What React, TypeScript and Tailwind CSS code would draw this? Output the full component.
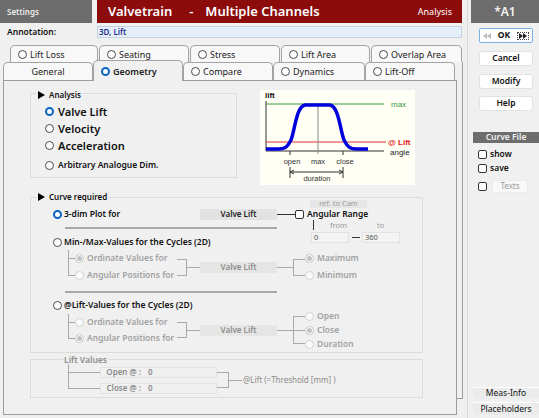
import React from 'react';

type RState = 'on' | 'off' | 'dis' | 'dison';

const Radio: React.FC<{ s: RState }> = ({ s }) => {
  if (s === 'on')
    return <span className="block w-[9px] h-[9px] shrink-0 rounded-full border-[2.5px] border-[#0a64c2] bg-white" />;
  if (s === 'off')
    return <span className="block w-[9px] h-[9px] shrink-0 rounded-full border border-[#4a4a4a] bg-white" />;
  if (s === 'dison')
    return (
      <span className="flex items-center justify-center w-[9px] h-[9px] shrink-0 rounded-full border border-[#c6c6c6] bg-white">
        <span className="w-[5px] h-[5px] rounded-full bg-[#c2c2c2]" />
      </span>
    );
  return <span className="block w-[9px] h-[9px] shrink-0 rounded-full border border-[#d2d2d2] bg-[#fbfbfb]" />;
};

const Tri = () => (
  <svg width="7" height="8" viewBox="0 0 7 8">
    <path d="M0 0L7 4L0 8Z" fill="#000" />
  </svg>
);

const Check = () => <span className="block w-[9px] h-[9px] shrink-0 rounded-[2px] border border-[#333] bg-white" />;

// one leg of a tree connector: vertical line + horizontal stub to the row
const Stub: React.FC<{ w: string; last?: boolean }> = ({ w, last }) => (
  <div className={`flex flex-col self-stretch shrink-0 ${w}`}>
    <div className="flex-1 border-l border-b border-[#a9a9a9]" />
    <div className={last ? 'flex-1' : 'flex-1 border-l border-[#a9a9a9]'} />
  </div>
);

const Tab: React.FC<{ className: string; label: string; radio?: RState; active?: boolean }> = ({
  className,
  label,
  radio,
  active,
}) => (
  <div
    className={`${className} shrink-0 border border-b-0 border-[#a3a3a3] rounded-t-[5px] flex items-center gap-[3px] text-[9px] leading-none text-[#222] ${
      active ? 'h-[21px] -mb-[1px] relative z-10 bg-[#f0f0f0] font-semibold pl-[7px]' : 'h-full bg-[#f8f8f8]'
    } ${radio ? (active ? '' : 'pl-[7px]') : 'justify-center'}`}
  >
    {radio && <Radio s={radio} />}
    <span>{label}</span>
  </div>
);

const ValveBox: React.FC<{ dim?: boolean }> = ({ dim }) => (
  <div
    className={`w-[77px] h-[11px] shrink-0 flex items-center justify-center text-[8px] leading-none font-semibold ${
      dim ? 'bg-[#e5e5e5] text-[#8c8c8c]' : 'bg-[#e2e2e2] text-[#222]'
    }`}
  >
    Valve Lift
  </div>
);

const LiftChart = () => (
  <svg width="155" height="95" viewBox="0 0 155 95" className="shrink-0 bg-[#fffff6]" style={{ fontFamily: 'Liberation Sans, Arial, sans-serif' }}>
    <text x="5" y="8" fontSize="8" fontWeight="bold" fill="#111">lift</text>
    <line x1="6" y1="11" x2="6" y2="61" stroke="#333" strokeWidth="1" />
    <line x1="6" y1="61" x2="124" y2="61" stroke="#333" strokeWidth="1" />
    <line x1="6" y1="14" x2="124" y2="14" stroke="#3a9a3a" strokeWidth="1" />
    <text x="131" y="17" fontSize="8" fill="#3a9a3a">max</text>
    <line x1="6" y1="52" x2="126" y2="52" stroke="#e03030" strokeWidth="1" />
    <text x="128" y="55" fontSize="8" fontWeight="bold" fill="#e02020">@ Lift</text>
    <text x="130" y="65" fontSize="8" fill="#222">angle</text>
    <line x1="58" y1="15" x2="58" y2="64" stroke="#888" strokeWidth="1" />
    <path
      d="M6 59 L18 59 C26 59 28 56 31 50 C35 40 36 17 45 15 L70 15 C79 17 80 40 84 50 C87 56 89 59 97 59 L108 59"
      fill="none"
      stroke="#0000dc"
      strokeWidth="3.5"
    />
    <line x1="30" y1="61" x2="30" y2="65" stroke="#333" />
    <line x1="83" y1="61" x2="83" y2="65" stroke="#333" />
    <text x="32" y="74" fontSize="7.5" fill="#333" textAnchor="middle">open</text>
    <text x="58" y="74" fontSize="7.5" fill="#333" textAnchor="middle">max</text>
    <text x="85" y="74" fontSize="7.5" fill="#333" textAnchor="middle">close</text>
    <line x1="30" y1="77" x2="30" y2="88" stroke="#333" />
    <line x1="83" y1="77" x2="83" y2="88" stroke="#333" />
    <line x1="30" y1="82" x2="83" y2="82" stroke="#333" />
    <path d="M30 82 L34 80 M30 82 L34 84 M83 82 L79 80 M83 82 L79 84" stroke="#333" fill="none" />
    <text x="57" y="91" fontSize="7.5" fill="#333" textAnchor="middle">duration</text>
  </svg>
);

const SideButton: React.FC<{ label: string; className: string }> = ({ label, className }) => (
  <div
    className={`${className} ml-[11px] w-[54px] h-[15px] rounded-[3px] bg-white border border-[#e2e2e2] flex items-center justify-center text-[8.5px] leading-none font-semibold text-[#111]`}
  >
    {label}
  </div>
);

export default function App() {
  return (
    <div className="w-[539px] h-[418px] bg-[#f0f0f0] flex overflow-hidden font-['Noto_Sans',sans-serif] text-[#111]">
      {/* main column */}
      <div className="w-[467px] flex flex-col">
        <div className="flex h-[23px]">
          <div className="w-[92px] bg-[#6d6d6d] flex items-center pl-[7px] text-[8px] font-semibold text-[#ececec]">Settings</div>
          <div className="ml-[5px] w-[365px] bg-[#8c0b0b] flex items-center text-white">
            <span className="ml-[11px] text-[13px] font-semibold">Valvetrain</span>
            <span className="ml-[17px] text-[13px] font-semibold">-</span>
            <span className="ml-[12px] text-[13px] font-semibold">Multiple Channels</span>
            <span className="ml-auto mr-[10px] text-[9px]">Analysis</span>
          </div>
        </div>

        <div className="mt-[2px] h-[14px] flex items-center">
          <div className="w-[97px] pl-[7px] text-[8.5px] font-semibold">Annotation:</div>
          <div className="w-[365px] h-[12px] bg-[#e6eff9] border border-[#c4d3e2] flex items-center pl-[1px] text-[8px] font-semibold text-[#1c2f8c] leading-none">
            3D, Lift
          </div>
        </div>

        {/* tabs + page */}
        <div className="mt-[6px] pl-[3px]">
          <div className="flex gap-[1px] ml-[7px] h-[17px]">
            <Tab className="w-[88px]" label="Lift Loss" radio="off" />
            <Tab className="w-[90px]" label="Seating" radio="off" />
            <Tab className="w-[90px]" label="Stress" radio="off" />
            <Tab className="w-[89px]" label="Lift Area" radio="off" />
            <Tab className="w-[91px]" label="Overlap Area" radio="off" />
          </div>
          <div className="flex">
            <div className="w-[454px] flex flex-col">
              <div className="flex items-end h-[18px]">
                <Tab className="w-[90px]" label="General" />
                <Tab className="w-[90px]" label="Geometry" radio="on" active />
                <Tab className="w-[90px]" label="Compare" radio="off" />
                <Tab className="w-[92px]" label="Dynamics" radio="off" />
                <Tab className="w-[90px]" label="Lift-Off" radio="off" />
              </div>

              <div className="h-[335px] border border-[#9c9c9c] bg-[#f0f0f0] flex flex-col">
                {/* analysis + chart */}
                <div className="mt-[9px] flex items-start">
                  <div className="ml-[26px] mt-[3px] w-[207px] h-[85px] border border-[#dcdcdc] flex flex-col">
                    <div className="-mt-[4px] ml-[6px] h-[10px] w-fit px-[1px] bg-[#f0f0f0] flex items-center gap-[4px] text-[8px] font-semibold leading-none">
                      <Tri />
                      <span>Analysis</span>
                    </div>
                    <div className="mt-[3px] pl-[14px] flex flex-col">
                      <div className="h-[17px] flex items-center gap-[4px] text-[11px] font-semibold leading-none">
                        <Radio s="on" />
                        <span>Valve Lift</span>
                      </div>
                      <div className="h-[17px] flex items-center gap-[4px] text-[11px] font-semibold leading-none">
                        <Radio s="off" />
                        <span>Velocity</span>
                      </div>
                      <div className="h-[17px] flex items-center gap-[4px] text-[11px] font-semibold leading-none">
                        <Radio s="off" />
                        <span>Acceleration</span>
                      </div>
                      <div className="mt-[3px] h-[17px] flex items-center gap-[4px] text-[8.5px] font-semibold leading-none">
                        <Radio s="off" />
                        <span>Arbitrary Analogue Dim.</span>
                      </div>
                    </div>
                  </div>
                  <div className="ml-[23px]">
                    <LiftChart />
                  </div>
                </div>

                {/* curve required */}
                <div className="mt-[12px] ml-[26px] w-[393px] h-[156px] border border-[#dcdcdc] flex flex-col">
                  <div className="-mt-[6px] ml-[6px] h-[10px] w-fit px-[1px] bg-[#f0f0f0] flex items-center gap-[4px] text-[8px] font-semibold leading-none">
                    <Tri />
                    <span>Curve required</span>
                  </div>

                  <div className="-mt-[2px] flex items-start">
                    <div className="w-[264px] flex flex-col">
                      <div className="mt-[8px] h-[12px] flex items-center">
                        <div className="w-[169px] pl-[22px] flex items-center gap-[2px] text-[8.5px] font-semibold leading-none">
                          <Radio s="on" />
                          <span>3-dim Plot for</span>
                        </div>
                        <ValveBox />
                        <div className="w-[18px] border-t border-[#333]" />
                      </div>
                      <div className="mt-[7px] ml-[34px] w-[212px] h-[2px] bg-[#a8a8a8]" />
                      <div className="mt-[7px] h-[12px] pl-[22px] flex items-center gap-[2px] text-[8.5px] font-semibold leading-none">
                        <Radio s="off" />
                        <span>Min-/Max-Values for the Cycles (2D)</span>
                      </div>
                    </div>
                    <div className="flex flex-col">
                      <div className="ml-[15px] w-[57px] h-[8px] bg-[#e6e6e6] flex items-center justify-center text-[7.5px] leading-none text-[#9a9a9a]">
                        ref. to Cam
                      </div>
                      <div className="h-[12px] flex items-center gap-[3px] text-[8.5px] font-semibold leading-none">
                        <Check />
                        <span>Angular Range</span>
                      </div>
                      <div className="h-[12px] flex items-start text-[7.5px] leading-none text-[#9a9a9a]">
                        <div className="w-[35px] h-[10px] pl-[18px] flex">
                          <div className="h-full border-l border-[#333]" />
                        </div>
                        <span className="w-[47px] pt-[2px]">from</span>
                        <span className="pt-[2px]">to</span>
                      </div>
                      <div className="h-[11px] flex items-center text-[7.5px] leading-none text-[#555]">
                        <div className="ml-[16px] w-[38px] h-full border border-[#e2e2e2] bg-[#f3f3f3] flex items-center pl-[2px]">0</div>
                        <div className="ml-[3px] w-[8px] border-t border-[#333]" />
                        <div className="ml-[2px] w-[38px] h-full border border-[#e2e2e2] bg-[#f3f3f3] flex items-center pl-[2px]">360</div>
                      </div>
                    </div>
                  </div>

                  {/* min/max tree */}
                  <div className="mt-[2px] h-[34px] flex items-center">
                    <div className="ml-[37px] w-[109px] flex flex-col text-[8.5px] font-semibold leading-none text-[#a2a2a2]">
                      <div className="h-[17px] flex items-center">
                        <Stub w="w-[7px]" />
                        <Radio s="dison" />
                        <span className="ml-[3px]">Ordinate Values for</span>
                      </div>
                      <div className="h-[17px] flex items-center">
                        <Stub w="w-[7px]" last />
                        <Radio s="dis" />
                        <span className="ml-[3px]">Angular Positions for</span>
                      </div>
                    </div>
                    <div className="w-[10px] h-[17px] border-t border-r border-b border-[#a9a9a9]" />
                    <div className="w-[13px] border-t border-[#a9a9a9]" />
                    <ValveBox dim />
                    <div className="w-[16px] border-t border-[#a9a9a9]" />
                    <div className="w-[12px] h-[17px] border-l border-t border-b border-[#a9a9a9]" />
                    <div className="flex flex-col text-[8.5px] font-semibold leading-none text-[#a2a2a2]">
                      <div className="h-[17px] flex items-center gap-[3px]">
                        <Radio s="dison" />
                        <span>Maximum</span>
                      </div>
                      <div className="h-[17px] flex items-center gap-[3px]">
                        <Radio s="dis" />
                        <span>Minimum</span>
                      </div>
                    </div>
                  </div>

                  <div className="mt-[7px] ml-[34px] w-[212px] h-[2px] bg-[#a8a8a8]" />
                  <div className="mt-[6px] h-[12px] pl-[22px] flex items-center gap-[2px] text-[8.5px] font-semibold leading-none">
                    <Radio s="off" />
                    <span>@Lift-Values for the Cycles (2D)</span>
                  </div>

                  {/* @lift tree */}
                  <div className="-mt-[2px] h-[42px] flex items-center">
                    <div className="ml-[37px] w-[109px] flex flex-col text-[8.5px] font-semibold leading-none text-[#a2a2a2]">
                      <div className="h-[16px] flex items-center">
                        <Stub w="w-[7px]" />
                        <Radio s="dis" />
                        <span className="ml-[3px]">Ordinate Values for</span>
                      </div>
                      <div className="h-[16px] flex items-center">
                        <Stub w="w-[7px]" last />
                        <Radio s="dison" />
                        <span className="ml-[3px]">Angular Positions for</span>
                      </div>
                    </div>
                    <div className="w-[10px] h-[16px] border-t border-r border-b border-[#a9a9a9]" />
                    <div className="w-[13px] border-t border-[#a9a9a9]" />
                    <ValveBox dim />
                    <div className="w-[16px] border-t border-[#a9a9a9]" />
                    <div className="w-[12px] h-[28px] border-l border-t border-b border-[#a9a9a9] flex items-center">
                      <div className="w-full border-t border-[#a9a9a9]" />
                    </div>
                    <div className="flex flex-col text-[8.5px] font-semibold leading-none text-[#a2a2a2]">
                      <div className="h-[14px] flex items-center gap-[3px]">
                        <Radio s="dis" />
                        <span>Open</span>
                      </div>
                      <div className="h-[14px] flex items-center gap-[3px]">
                        <Radio s="dison" />
                        <span>Close</span>
                      </div>
                      <div className="h-[14px] flex items-center gap-[3px]">
                        <Radio s="dis" />
                        <span>Duration</span>
                      </div>
                    </div>
                  </div>
                </div>

                {/* lift values */}
                <div className="mt-[6px] ml-[26px] w-[393px] h-[39px] border border-[#dcdcdc] flex flex-col">
                  <div className="-mt-[5px] ml-[32px] h-[10px] w-fit px-[1px] bg-[#f0f0f0] flex items-center text-[8.5px] font-semibold leading-none text-[#8c8c8c]">
                    Lift Values
                  </div>
                  <div className="-mt-[1px] flex items-center">
                    <div className="ml-[37px] flex flex-col text-[8px] font-semibold leading-none text-[#8c8c8c]">
                      <div className="h-[16px] flex items-center">
                        <Stub w="w-[32px]" />
                        <div className="w-[117px] h-[11px] border border-[#e3e3e3] flex items-center">
                          <span className="w-[40px] text-right">Open @ :</span>
                          <span className="ml-[7px]">0</span>
                        </div>
                      </div>
                      <div className="h-[16px] flex items-center">
                        <Stub w="w-[32px]" last />
                        <div className="w-[117px] h-[11px] border border-[#e3e3e3] flex items-center">
                          <span className="w-[40px] text-right">Close @ :</span>
                          <span className="ml-[7px]">0</span>
                        </div>
                      </div>
                    </div>
                    <div className="w-[12px] h-[16px] border-t border-r border-b border-[#a9a9a9]" />
                    <div className="w-[13px] border-t border-[#a9a9a9]" />
                    <span className="ml-[1px] text-[8px] leading-none text-[#8c8c8c]">@Lift (=Threshold [mm] )</span>
                  </div>
                </div>
              </div>
            </div>
            <div className="w-[6px] h-[337px] border-r border-b border-[#9c9c9c]" />
          </div>
        </div>
      </div>

      {/* sidebar */}
      <div className="w-[72px] h-[418px] border-l border-[#d8d8d8] flex flex-col">
        <div className="ml-[3px] h-[23px] bg-[#6d6d6d] text-[#f4f4f4] text-[12px] font-semibold flex items-center justify-center">*A1</div>
        <div className="mt-[5px] ml-[11px] w-[54px] h-[15px] rounded-[2px] border border-[#7db0e3] bg-white flex items-center justify-between px-[3px]">
          <svg width="8" height="6" viewBox="0 0 8 6">
            <path d="M4 0L0 3L4 6Z M8 0L4 3L8 6Z" fill="#bdbdbd" />
          </svg>
          <span className="text-[8.5px] font-bold leading-none">OK</span>
          <span className="border border-dotted border-[#444] px-[1px] flex items-center">
            <svg width="8" height="6" viewBox="0 0 8 6">
              <path d="M0 0L4 3L0 6Z M4 0L8 3L4 6Z" fill="#222" />
            </svg>
          </span>
        </div>
        <SideButton className="mt-[8px]" label="Cancel" />
        <SideButton className="mt-[8px]" label="Modify" />
        <SideButton className="mt-[7px]" label="Help" />
        <div className="mt-[21px] ml-[5px] h-[11px] bg-[#6d6d6d] text-[#f0f0f0] text-[8.5px] leading-none font-semibold flex items-center justify-center">
          Curve File
        </div>
        <div className="mt-[5px] ml-[10px] h-[12px] flex items-center gap-[3px] text-[8.5px] font-semibold leading-none">
          <Check />
          <span>show</span>
        </div>
        <div className="mt-[2px] ml-[10px] h-[12px] flex items-center gap-[3px] text-[8.5px] font-semibold leading-none">
          <Check />
          <span>save</span>
        </div>
        <div className="mt-[5px] ml-[10px] h-[14px] flex items-center gap-[5px]">
          <Check />
          <div className="w-[36px] h-[13px] bg-[#f8f8f8] border border-[#ececec] flex items-center justify-center text-[8px] leading-none text-[#9a9a9a]">
            Texts
          </div>
        </div>
        <div className="mt-auto ml-[5px] h-[12px] bg-[#ebebeb] border-t border-white flex items-center justify-center text-[8.5px] leading-none text-[#111]">
          Meas-Info
        </div>
        <div className="mt-[3px] mb-[3px] ml-[5px] h-[13px] bg-[#ebebeb] border-t border-white flex items-center justify-center text-[8.5px] leading-none text-[#111]">
          Placeholders
        </div>
      </div>
    </div>
  );
}
